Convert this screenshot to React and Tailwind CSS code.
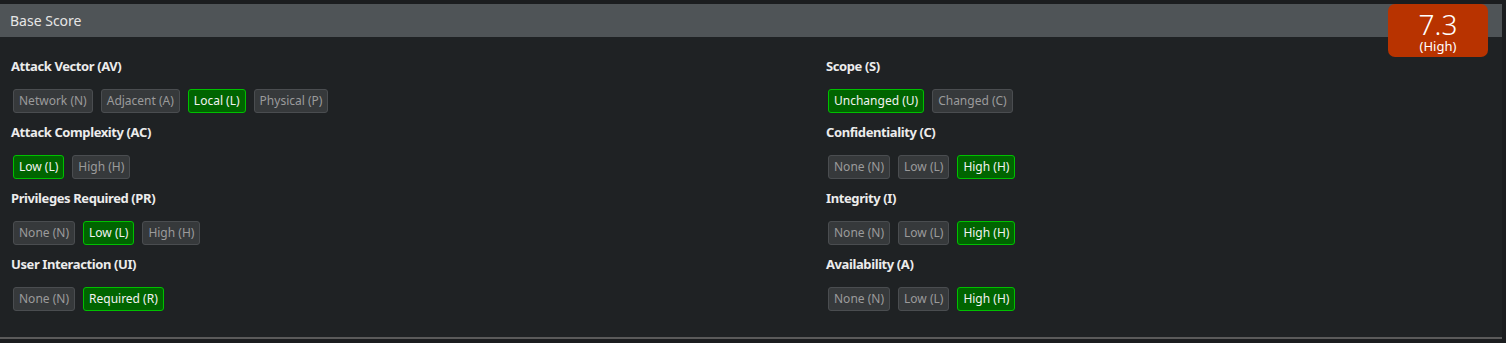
const groupsLeft = [
  { title: 'Attack Vector (AV)', options: ['Network (N)', 'Adjacent (A)', 'Local (L)', 'Physical (P)'], selected: 2 },
  { title: 'Attack Complexity (AC)', options: ['Low (L)', 'High (H)'], selected: 0 },
  { title: 'Privileges Required (PR)', options: ['None (N)', 'Low (L)', 'High (H)'], selected: 1 },
  { title: 'User Interaction (UI)', options: ['None (N)', 'Required (R)'], selected: 1 },
]

const groupsRight = [
  { title: 'Scope (S)', options: ['Unchanged (U)', 'Changed (C)'], selected: 0 },
  { title: 'Confidentiality (C)', options: ['None (N)', 'Low (L)', 'High (H)'], selected: 2 },
  { title: 'Integrity (I)', options: ['None (N)', 'Low (L)', 'High (H)'], selected: 2 },
  { title: 'Availability (A)', options: ['None (N)', 'Low (L)', 'High (H)'], selected: 2 },
]

function Group({ group }) {
  return (
    <div className="h-[66px]">
      <h3 className="h-[20px] leading-[20px] text-[13px] font-bold tracking-[-0.4px] text-[#ececec]">{group.title}</h3>
      <div className="mt-[13px] flex gap-[8px] pl-[2px]">
        {group.options.map((opt, i) => (
          <button
            key={opt}
            className={
              i === group.selected
                ? 'h-[24px] px-[5px] rounded-[3px] border border-[#00c000] bg-[#006400] text-[12px] text-[#f2f2f2]'
                : 'h-[24px] px-[5px] rounded-[3px] border border-[#4a4d50] bg-[#36393b] text-[12px] text-[#9b9b9b]'
            }
          >
            {opt}
          </button>
        ))}
      </div>
    </div>
  )
}

export default function App() {
  return (
    <div className="h-[343px] bg-[#1b1d1f] pt-[4px]" style={{ fontFamily: '"Noto Sans", "Open Sans", sans-serif' }}>
      <div className="relative w-[1502px] h-[335px] bg-[#1f2224] border-b-2 border-[#5a5a5a]">
        <div className="h-[33px] bg-[#4f5457] px-[10px] flex items-center text-[14px] text-[#e6e6e6]">Base Score</div>

        {/* score badge */}
        <div className="absolute top-0 left-[1388px] w-[100px] h-[53px] rounded-[7px] bg-[#b83300] text-white flex flex-col items-center pt-[5px]">
          <span className="text-[28px] leading-[30px] font-light">7.3</span>
          <span className="text-[13px] leading-[14px]">(High)</span>
        </div>

        <div className="grid grid-cols-[815px_1fr] px-[11px] pt-[19px]">
          <div>
            {groupsLeft.map(g => <Group key={g.title} group={g} />)}
          </div>
          <div>
            {groupsRight.map(g => <Group key={g.title} group={g} />)}
          </div>
        </div>
      </div>
    </div>
  )
}
